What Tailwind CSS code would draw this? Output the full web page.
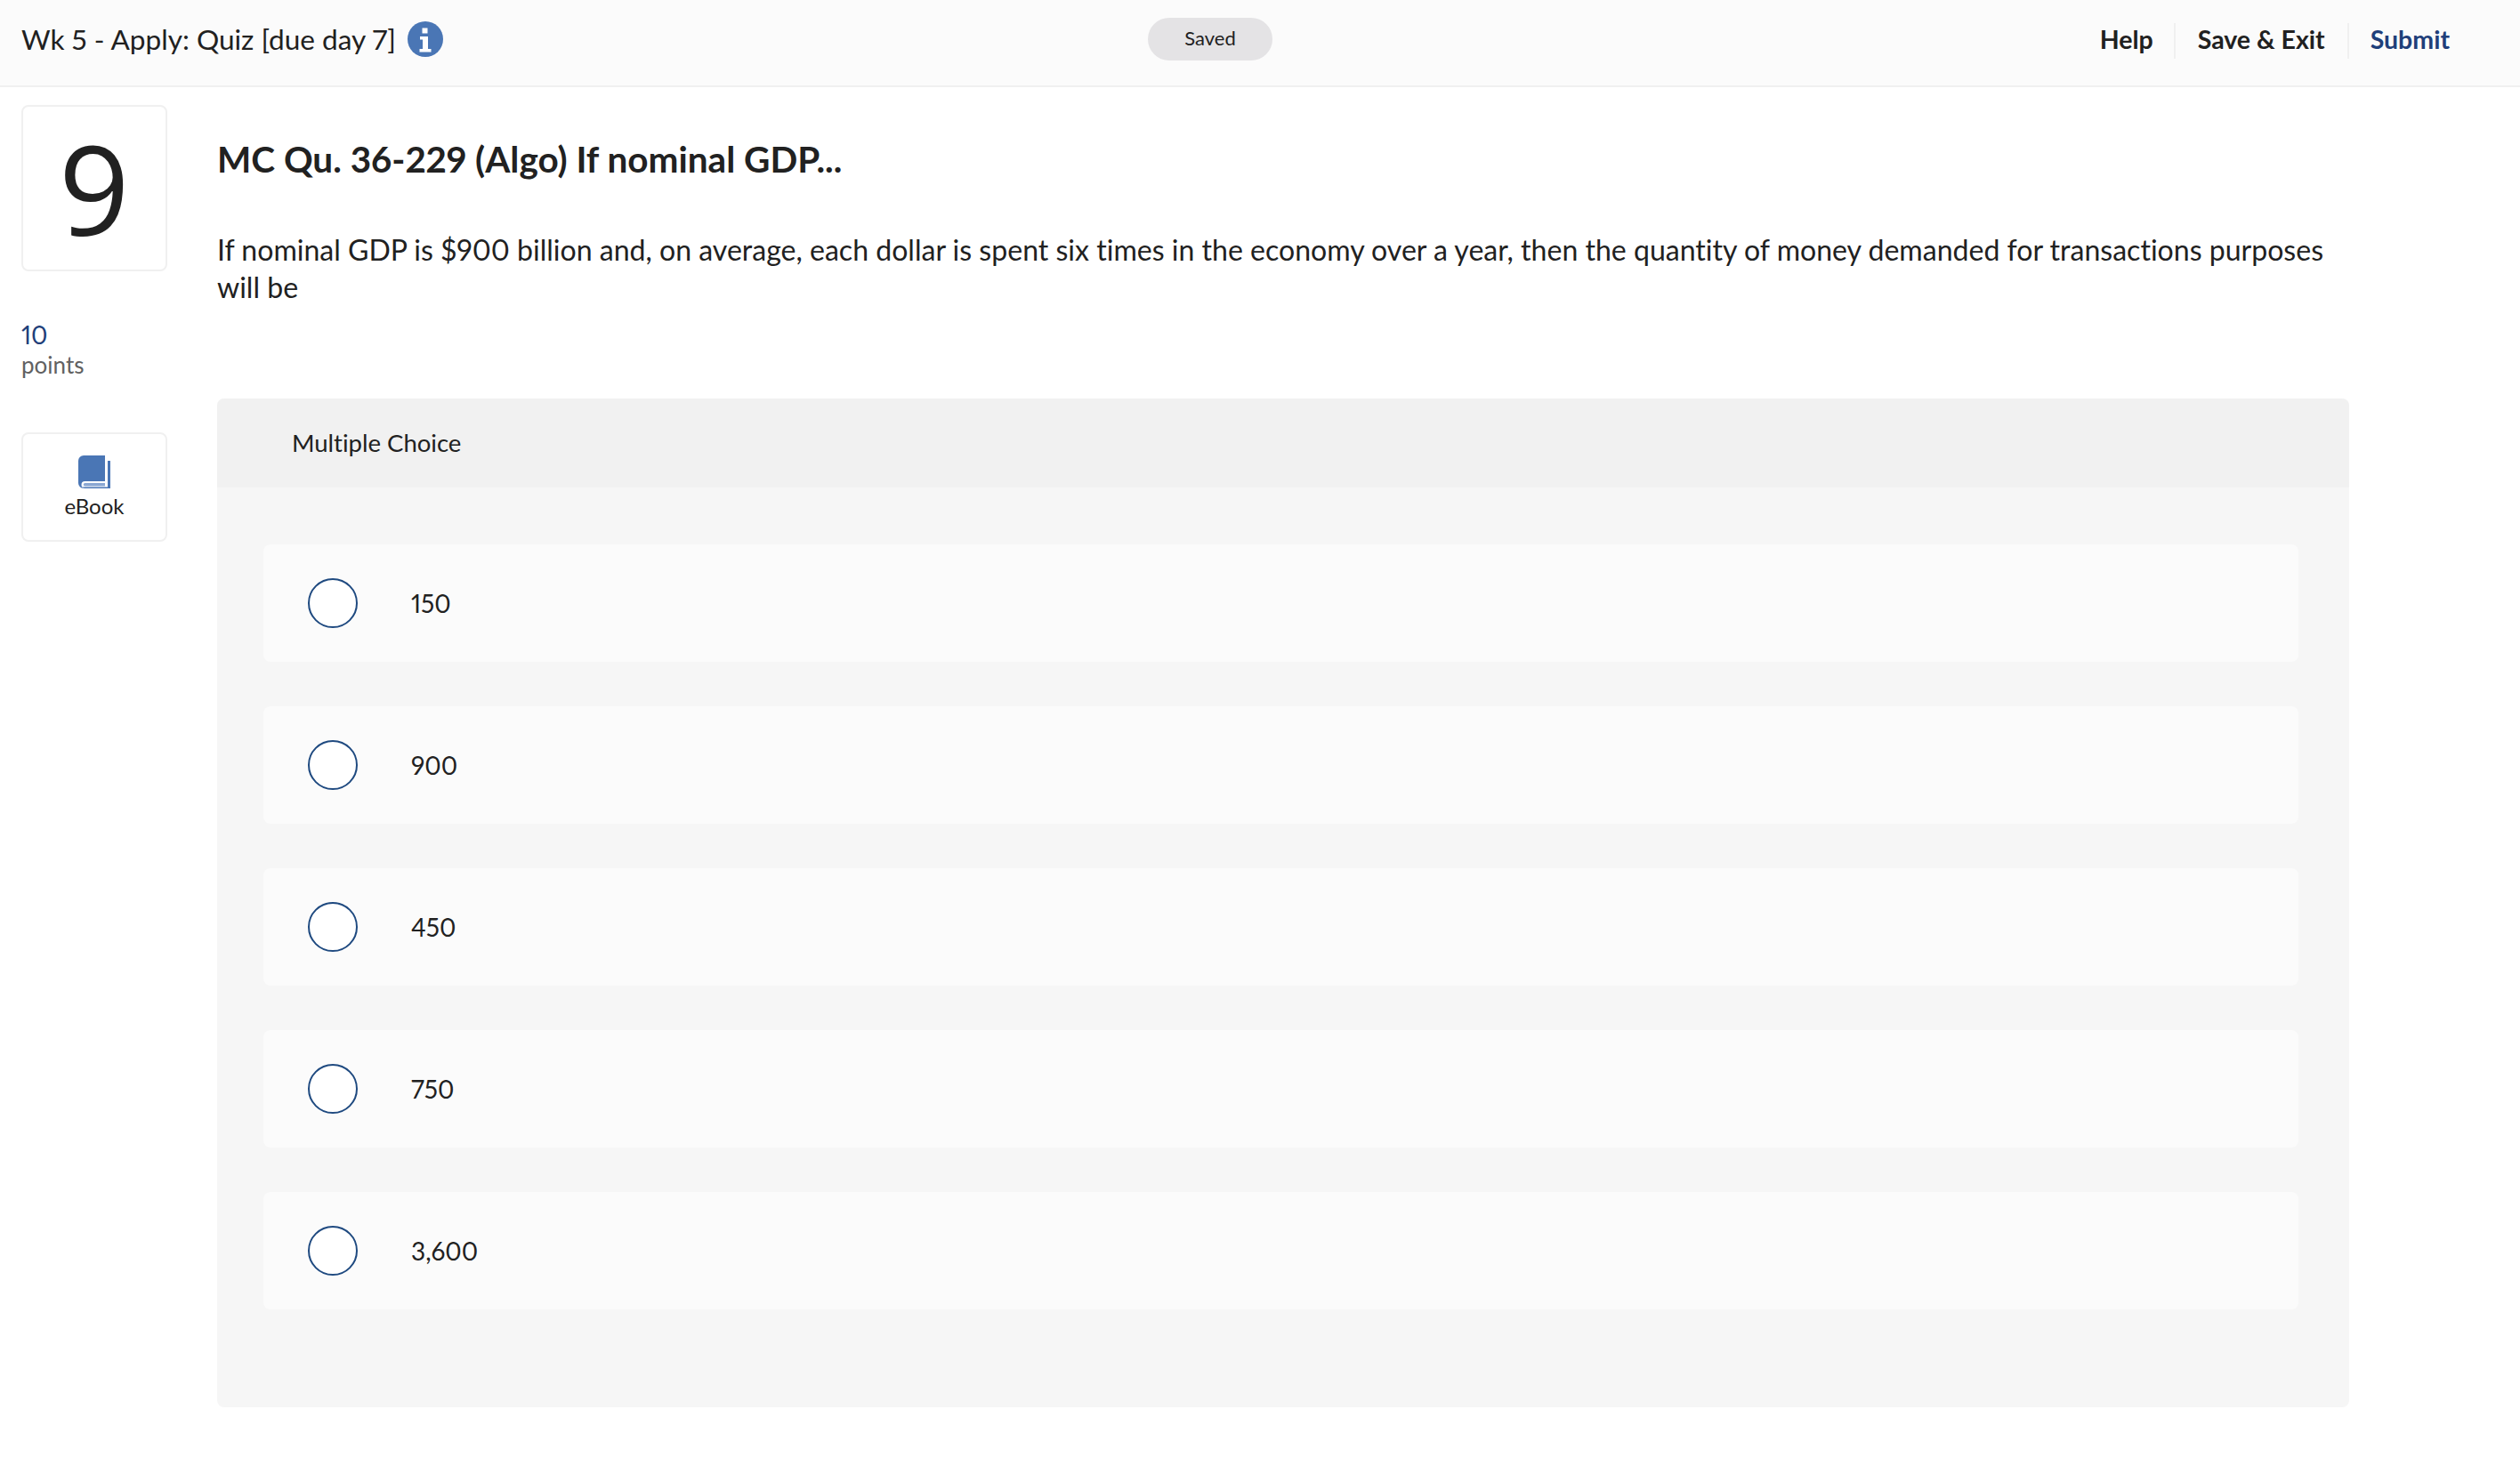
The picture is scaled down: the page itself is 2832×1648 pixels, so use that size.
<!DOCTYPE html>
<html><head><meta charset="utf-8"><script src="https://cdn.jsdelivr.net/npm/@tailwindcss/browser@4"></script><title>Quiz</title></head>
<body class="bg-white text-[#212121] font-['Lato','Open_Sans',sans-serif] proportional-nums [font-variant-ligatures:none]">
<div class="w-[2832px] h-[1648px] overflow-hidden">
<header class="h-[98px] bg-[#fbfbfb] border-b-2 border-[#f0f0f0] relative flex items-center justify-between pl-6 pr-[79px] pb-2">
  <div class="flex items-center gap-[13px]">
    <span class="text-[31.55px] leading-[44px]">Wk 5 - Apply: Quiz [due day 7]</span>
    <svg class="w-10 h-10" viewBox="0 0 40 40"><circle cx="20" cy="20" r="20" fill="#4a76b5"/><rect x="16.500" y="7.500" width="6" height="6" fill="#fff"/><path d="M14 17h9v14h3.500v3.500H13.500V31H17V20.500h-3z" fill="#fff"/></svg>
  </div>
  <div class="absolute left-[1290px] top-5 w-[140px] h-12 rounded-full bg-[#e4e3e5] flex items-center justify-center text-[22px] pb-[3px]">Saved</div>
  <nav class="flex items-center text-[28.5px] font-bold mt-1">
    <a class="pr-[23px] h-10 leading-[36px]">Help</a>
    <a class="px-[25px] border-l-2 border-[#f0f0f0] h-10 leading-[36px]">Save &amp; Exit</a>
    <a class="pl-6 border-l-2 border-[#f0f0f0] h-10 leading-[36px] text-[#1f3f7a]">Submit</a>
  </nav>
</header>
<main class="flex pl-6 pt-5 gap-[56px]">
  <aside class="w-[164px] shrink-0">
    <div class="h-[187px] border-2 border-[#f0f0f0] rounded-lg flex items-center justify-center font-['Open_Sans',sans-serif] font-medium text-[139px] leading-none">9</div>
    <div class="mt-[52px] text-[28px] leading-[38px] text-[#1f3f7a]">10</div>
    <div class="text-[26px] leading-[30px] text-[#616161]">points</div>
    <div class="mt-[61px] h-[123px] border-2 border-[#f0f0f0] rounded-lg flex flex-col items-center pt-[24px]">
      <svg class="w-9 h-[37px]" viewBox="0 0 36 37"><path d="M6 0h24v29H7.500a4 4 0 0 0 0 8H6a6 6 0 0 1-6-6V6a6 6 0 0 1 6-6z" fill="#4a76b5"/><path d="M33 6h3v31H7a6 6 0 0 1-3-1.500h29z" fill="#4a76b5"/><path d="M7.500 31H30v3.500H7.500a1.750 1.750 0 0 1 0-3.500z" fill="#8aa7d2"/></svg>
      <span class="text-[24px] leading-7 mt-[6px]">eBook</span>
    </div>
  </aside>
  <section class="w-[2396px]">
    <h1 class="mt-[38px] text-[40.5px] leading-[46px] font-bold">MC Qu. 36-229 (Algo) If nominal GDP...</h1>
    <p class="mt-[58px] w-[2380px] text-[32.05px] leading-[41.5px]">If nominal GDP is $900 billion and, on average, each dollar is spent six times in the economy over a year, then the quantity of money demanded for transactions purposes will be</p>
    <div class="mt-[105px] h-[1134px] bg-[#f6f6f6] rounded-lg overflow-hidden">
      <div class="h-[100px] bg-[#f1f1f1] flex items-center pl-[84px] text-[27.5px]">Multiple Choice</div>
      <div class="pt-16 pl-[52px] pr-[57px] flex flex-col gap-[50px]">
        <label class="h-[132px] bg-[#fbfbfb] rounded-lg flex items-center pl-[50px] gap-[60px] text-[28px]"><span class="w-14 h-14 rounded-full border-2 border-[#1f4a80] bg-white"></span>150</label>
        <label class="h-[132px] bg-[#fbfbfb] rounded-lg flex items-center pl-[50px] gap-[60px] text-[28px]"><span class="w-14 h-14 rounded-full border-2 border-[#1f4a80] bg-white"></span>900</label>
        <label class="h-[132px] bg-[#fbfbfb] rounded-lg flex items-center pl-[50px] gap-[60px] text-[28px]"><span class="w-14 h-14 rounded-full border-2 border-[#1f4a80] bg-white"></span>450</label>
        <label class="h-[132px] bg-[#fbfbfb] rounded-lg flex items-center pl-[50px] gap-[60px] text-[28px]"><span class="w-14 h-14 rounded-full border-2 border-[#1f4a80] bg-white"></span>750</label>
        <label class="h-[132px] bg-[#fbfbfb] rounded-lg flex items-center pl-[50px] gap-[60px] text-[28px]"><span class="w-14 h-14 rounded-full border-2 border-[#1f4a80] bg-white"></span>3,600</label>
      </div>
    </div>
  </section>
</main>
</div>
</body></html>
